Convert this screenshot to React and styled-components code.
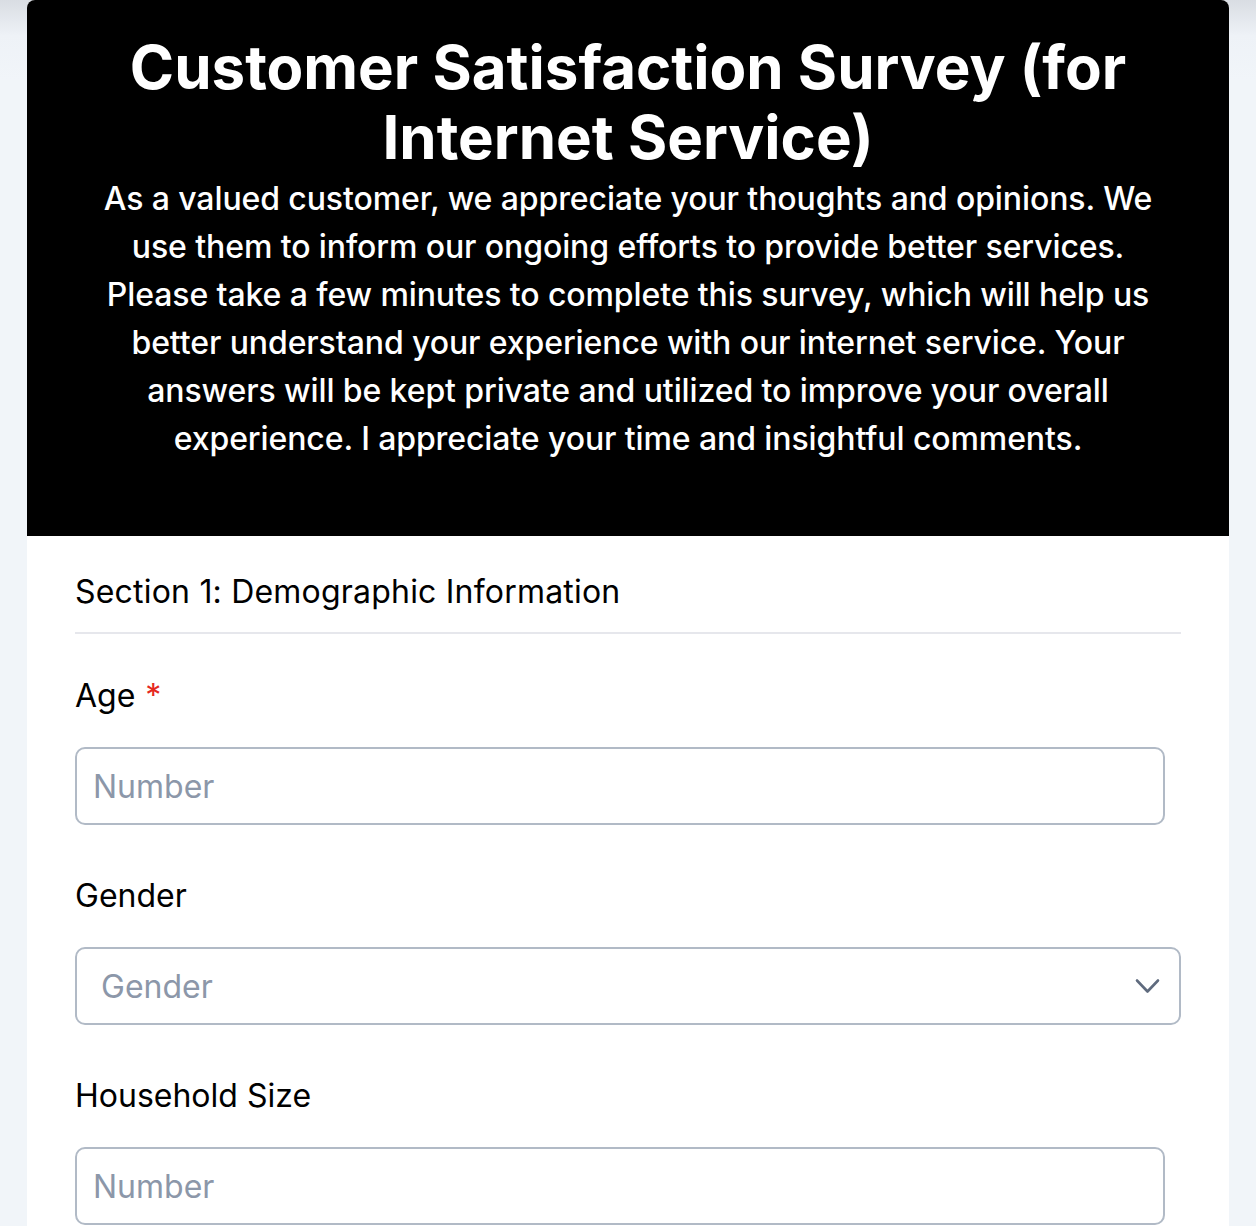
import React from "react";
import styled, { createGlobalStyle } from "styled-components";

const GlobalStyle = createGlobalStyle`
  * {
    box-sizing: border-box;
  }
  body {
    margin: 0;
    font-family: Inter, "Noto Sans", sans-serif;
    background: linear-gradient(to bottom, #d9dde3 0px, #eef2f7 36px, #f1f5f9 80px);
    min-height: 100vh;
  }
`;

const Card = styled.div`
  margin: 0 27px;
  background: #ffffff;
  border-radius: 8px 8px 0 0;
  overflow: hidden;
`;

const Header = styled.header`
  background: #000000;
  color: #ffffff;
  text-align: center;
  padding: 32px 48px 73px;
`;

const Title = styled.h1`
  margin: 0;
  font-size: 60px;
  line-height: 70px;
  font-weight: 700;
`;

const Intro = styled.p`
  max-width: 1058px;
  margin: 3px auto 0;
  font-size: 32px;
  line-height: 48px;
  font-weight: 500;
  letter-spacing: -0.1px;
`;

const Form = styled.form`
  padding: 32px 48px 48px;
`;

const SectionTitle = styled.h2`
  margin: 0;
  padding-bottom: 16px;
  font-size: 32px;
  line-height: 48px;
  font-weight: 400;
  letter-spacing: 0.2px;
  color: #000000;
  border-bottom: 2px solid #e6e7ec;
`;

const Fields = styled.div`
  display: flex;
  flex-direction: column;
  gap: 47px;
  padding-top: 38px;
`;

const Field = styled.div`
  display: flex;
  flex-direction: column;
  gap: 27px;
`;

const Label = styled.label`
  font-size: 32px;
  line-height: 48px;
  font-weight: 400;
  color: #000000;
`;

const Required = styled.span`
  color: #e5281e;
  margin-left: 10px;
`;

const TextInput = styled.input`
  width: calc(100% - 16px);
  height: 78px;
  padding: 0 16px;
  border: 2px solid #b1bac6;
  border-radius: 10px;
  font-family: inherit;
  font-size: 32px;
  color: #111827;
  background: #ffffff;
  outline: none;

  &::placeholder {
    color: #8c97a9;
  }
`;

const SelectWrap = styled.div`
  position: relative;
  width: 100%;
`;

const Select = styled.select`
  width: 100%;
  height: 78px;
  padding: 0 24px;
  border: 2px solid #b1bac6;
  border-radius: 10px;
  font-family: inherit;
  font-size: 32px;
  color: #8c97a9;
  background: #ffffff;
  appearance: none;
  outline: none;
`;

const Chevron = styled.svg`
  position: absolute;
  right: 21px;
  top: 50%;
  transform: translateY(-50%);
  width: 25px;
  height: 15px;
  pointer-events: none;
`;

const App = () => {
  return (
    <>
      <GlobalStyle />
      <Card>
        <Header>
          <Title>Customer Satisfaction Survey (for Internet Service)</Title>
          <Intro>
            As a valued customer, we appreciate your thoughts and opinions. We
            use them to inform our ongoing efforts to provide better services.
            Please take a few minutes to complete this survey, which will help
            us better understand your experience with our internet service.
            Your answers will be kept private and utilized to improve your
            overall experience. I appreciate your time and insightful comments.
          </Intro>
        </Header>
        <Form onSubmit={(e) => e.preventDefault()}>
          <SectionTitle>Section 1: Demographic Information</SectionTitle>
          <Fields>
            <Field>
              <Label htmlFor="age">
                Age<Required>*</Required>
              </Label>
              <TextInput id="age" type="number" placeholder="Number" />
            </Field>
            <Field>
              <Label htmlFor="gender">Gender</Label>
              <SelectWrap>
                <Select id="gender" defaultValue="">
                  <option value="" disabled>
                    Gender
                  </option>
                  <option value="male">Male</option>
                  <option value="female">Female</option>
                  <option value="other">Other</option>
                </Select>
                <Chevron viewBox="0 0 25 15" fill="none" stroke="#5f6b7e" strokeWidth="2.6" strokeLinecap="round" strokeLinejoin="round">
                  <path d="M2 2l10.5 11L23 2" />
                </Chevron>
              </SelectWrap>
            </Field>
            <Field>
              <Label htmlFor="household">Household Size</Label>
              <TextInput id="household" type="number" placeholder="Number" />
            </Field>
          </Fields>
        </Form>
      </Card>
    </>
  );
};

export default App;
